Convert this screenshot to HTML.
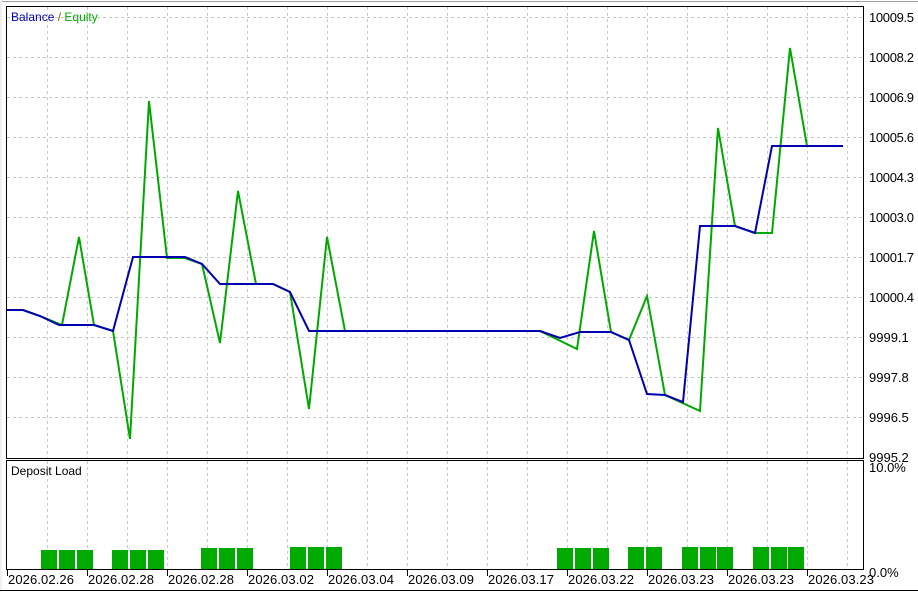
<!DOCTYPE html>
<html><head><style>
html,body{margin:0;padding:0;background:#fff;}
svg{display:block;font-family:"Liberation Sans",Tahoma,sans-serif;}
</style></head><body>
<svg width="918" height="592" viewBox="0 0 918 592" xmlns="http://www.w3.org/2000/svg">
<rect width="918" height="592" fill="#fff"/>
<line x1="0" y1="1.5" x2="918" y2="1.5" stroke="#a0a0a0" stroke-width="1"/>
<rect x="0" y="0" width="2" height="592" fill="#f0f0f0"/>
<g stroke="#c8c8c8" stroke-dasharray="3,3" stroke-width="1">
<path d="M47.5 7V458M87.5 7V458M127.5 7V458M167.5 7V458M207.5 7V458M247.5 7V458M287.5 7V458M327.5 7V458M367.5 7V458M407.5 7V458M447.5 7V458M487.5 7V458M527.5 7V458M567.5 7V458M607.5 7V458M647.5 7V458M687.5 7V458M727.5 7V458M767.5 7V458M807.5 7V458M847.5 7V458"/>
<path d="M7 17.5H863M7 57.5H863M7 97.5H863M7 137.5H863M7 177.5H863M7 217.5H863M7 257.5H863M7 297.5H863M7 337.5H863M7 377.5H863M7 417.5H863"/>
<path d="M47.5 461V569M87.5 461V569M127.5 461V569M167.5 461V569M207.5 461V569M247.5 461V569M287.5 461V569M327.5 461V569M367.5 461V569M407.5 461V569M447.5 461V569M487.5 461V569M527.5 461V569M567.5 461V569M607.5 461V569M647.5 461V569M687.5 461V569M727.5 461V569M767.5 461V569M807.5 461V569M847.5 461V569"/>
</g>
<rect x="6.5" y="6.5" width="857" height="452" fill="none" stroke="#000"/>
<rect x="6.5" y="460.5" width="857" height="109" fill="none" stroke="#000"/>
<polyline fill="none" stroke="#00a800" stroke-width="2" points="7,310 23,310 40,316 62,325 79,237 94,325 113,331 130,439 149,101 167,258 185,258 202,264 220,343 238,191 256,284 273,284 290,292 309,409 327,237 345,331 540,331 577,349 594,231 611,332 629,340 647,296 665,395 700,411 718,128 735,226 755,233 772,233 790,48 807,146 843,146"/>
<polyline fill="none" stroke="#0000b0" stroke-width="2" points="7,310 23,310 40,316 59,325 94,325 113,331 133,257 185,257 202,264 220,284 273,284 290,292 309,331 540,331 560,338 580,332 611,332 629,340 647,394 665,395 683,402 700,226 735,226 755,233 772,146 843,146"/>
<text x="11" y="21" font-size="12" fill="#0000b0">Balance <tspan fill="#806000">/</tspan> <tspan fill="#00b000">Equity</tspan></text>
<text x="11" y="475" font-size="12" fill="#000">Deposit Load</text>
<g fill="#00aa00">
<rect x="41" y="550" width="16" height="19"/><rect x="59" y="550" width="16" height="19"/><rect x="77" y="550" width="16" height="19"/>
<rect x="112" y="550" width="16" height="19"/><rect x="130" y="550" width="16" height="19"/><rect x="148" y="550" width="16" height="19"/>
<rect x="201" y="548" width="16" height="21"/><rect x="219" y="548" width="16" height="21"/><rect x="237" y="548" width="16" height="21"/>
<rect x="290" y="547" width="16" height="22"/><rect x="308" y="547" width="16" height="22"/><rect x="326" y="547" width="16" height="22"/>
<rect x="557" y="548" width="16" height="21"/><rect x="575" y="548" width="16" height="21"/><rect x="593" y="548" width="16" height="21"/>
<rect x="628" y="547" width="16" height="22"/><rect x="646" y="547" width="16" height="22"/>
<rect x="682" y="547" width="16" height="22"/><rect x="700" y="547" width="16" height="22"/><rect x="717" y="547" width="16" height="22"/>
<rect x="753" y="547" width="16" height="22"/><rect x="771" y="547" width="16" height="22"/><rect x="788" y="547" width="16" height="22"/>
</g>
<g font-size="13" fill="#000">
<text x="869" y="22" textLength="45">10009.5</text><text x="869" y="62" textLength="45">10008.2</text><text x="869" y="102" textLength="45">10006.9</text><text x="869" y="142" textLength="45">10005.6</text><text x="869" y="182" textLength="45">10004.3</text><text x="869" y="222" textLength="45">10003.0</text><text x="869" y="262" textLength="45">10001.7</text><text x="869" y="302" textLength="45">10000.4</text><text x="869" y="342">9999.1</text><text x="869" y="382">9997.8</text><text x="869" y="422">9996.5</text><text x="869" y="462">9995.2</text>
<text x="869" y="472">10.0%</text><text x="869" y="577">0.0%</text>
<g>
<text x="8" y="584" textLength="66">2026.02.26</text><text x="88" y="584" textLength="66">2026.02.28</text><text x="168" y="584" textLength="66">2026.02.28</text><text x="248" y="584" textLength="66">2026.03.02</text><text x="328" y="584" textLength="66">2026.03.04</text><text x="408" y="584" textLength="66">2026.03.09</text><text x="488" y="584" textLength="66">2026.03.17</text><text x="568" y="584" textLength="66">2026.03.22</text><text x="648" y="584" textLength="66">2026.03.23</text><text x="728" y="584" textLength="66">2026.03.23</text><text x="808" y="584" textLength="66">2026.03.23</text>
</g>
</g>
<g stroke="#000"><path d="M7.5 570V576M87.5 570V576M167.5 570V576M247.5 570V576M327.5 570V576M407.5 570V576M487.5 570V576M567.5 570V576M647.5 570V576M727.5 570V576M807.5 570V576"/></g>
<line x1="0" y1="590.5" x2="918" y2="590.5" stroke="#000"/>
</svg>
</body></html>
